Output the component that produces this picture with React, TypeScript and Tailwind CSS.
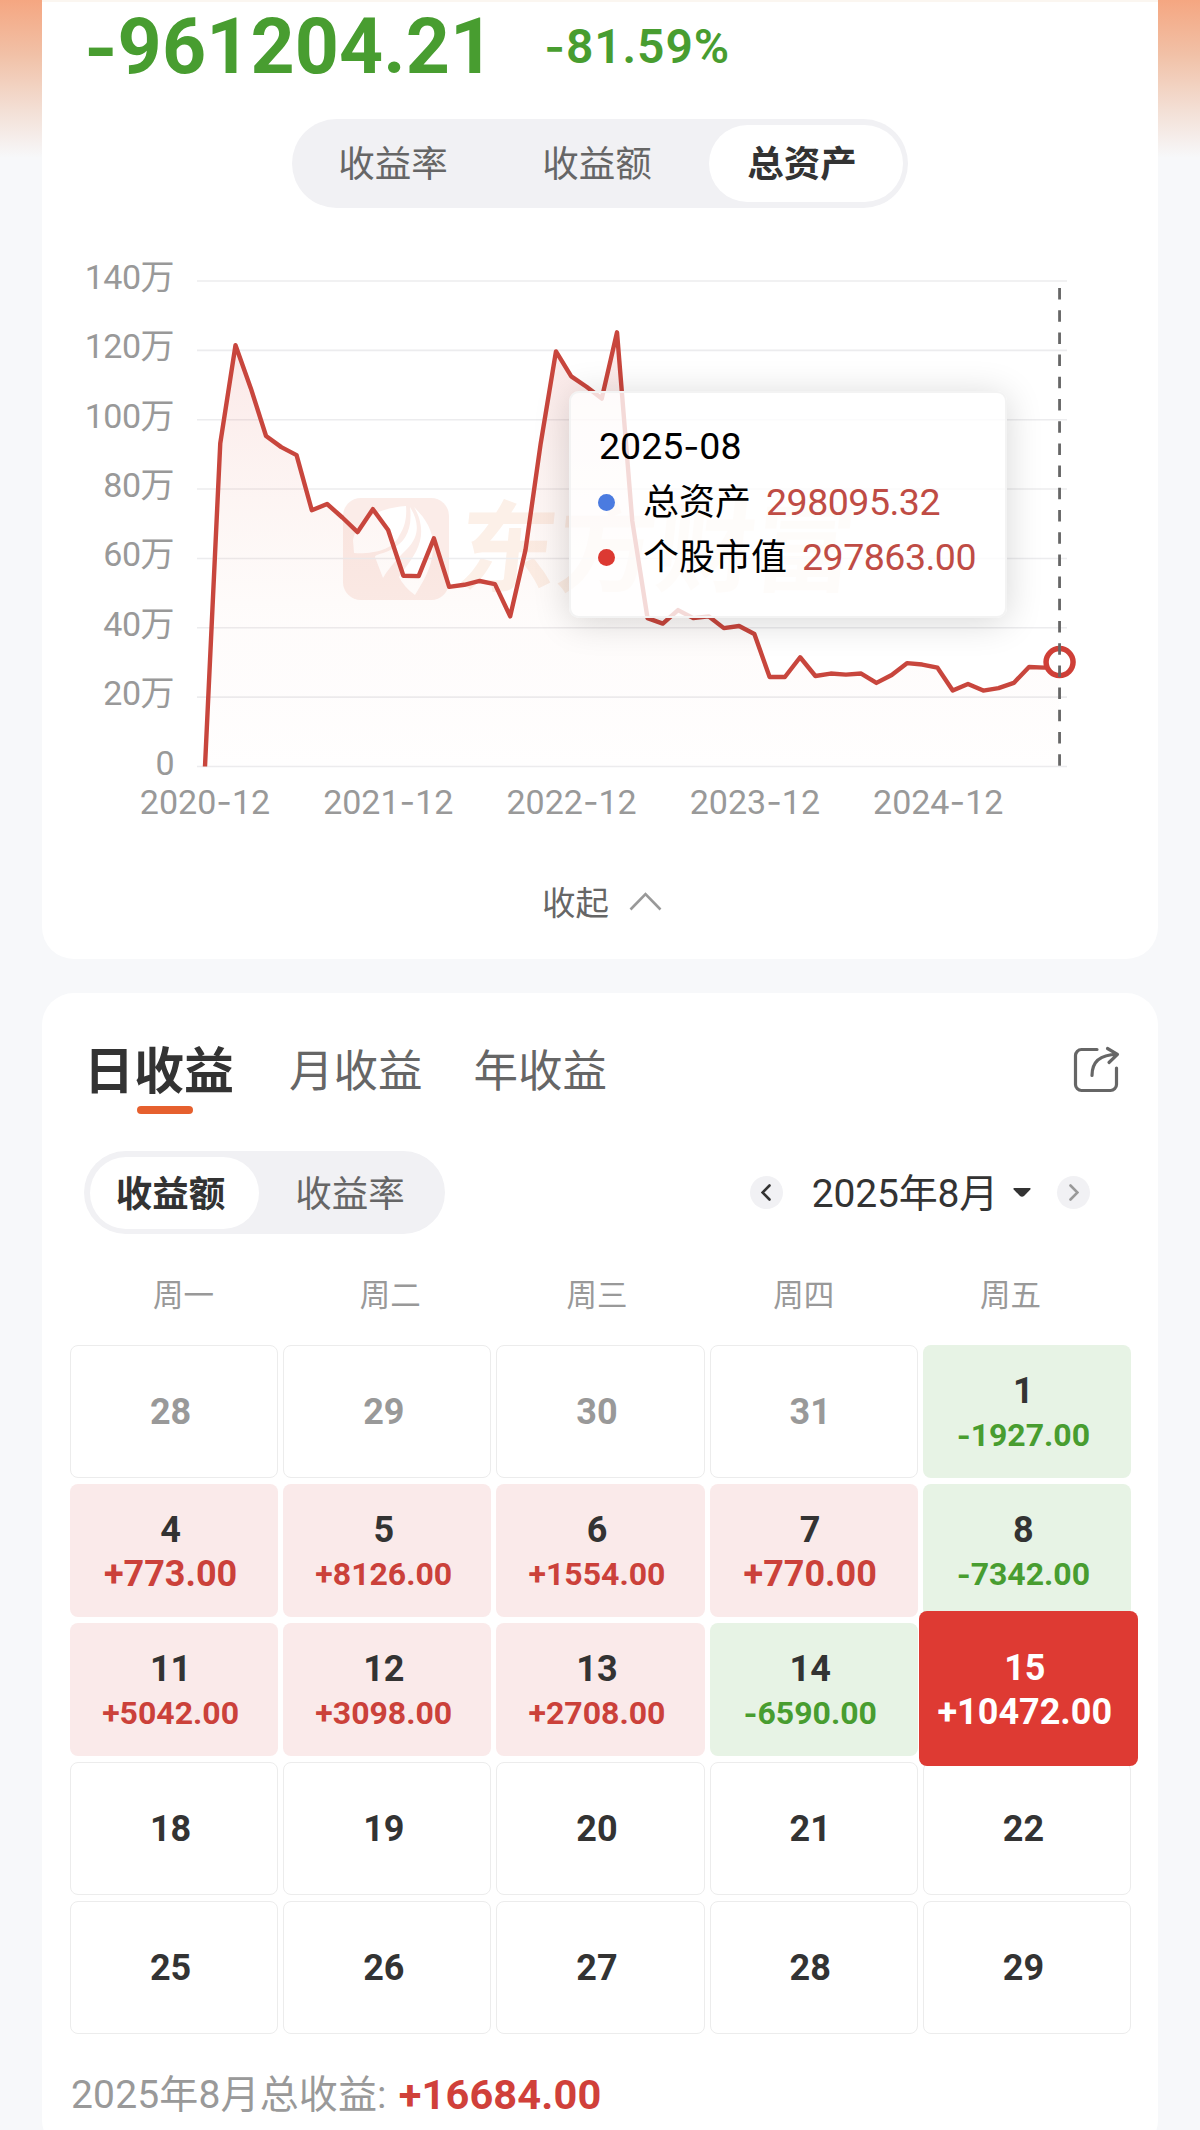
import { useState } from "react";

const Y_LABELS = ["140万", "120万", "100万", "80万", "60万", "40万", "20万", "0"];
const X_LABELS = ["2020-12", "2021-12", "2022-12", "2023-12", "2024-12"];

// one value per month, 2020-12 to 2025-08, in 万
const ASSETS = [
  0, 93.2, 121.5, 109.1, 95.3, 92.1, 89.8, 73.9, 75.7, 71.8, 67.6, 74.2, 68.2, 55, 54.9, 65.8, 51.8, 52.4, 53.5, 52.6, 43.3, 62.4, 93.2, 119.7, 112.5,
  109.5, 106.1, 125.2, 70.8, 42.8, 41.2, 45.1, 42.8, 43.3, 39.9, 40.5, 38.2, 25.8, 25.8, 31.5, 26.1, 26.8, 26.5, 26.8, 24.1, 26.4, 29.8, 29.4, 28.5,
  21.9, 23.8, 21.9, 22.6, 24.1, 28.7, 28.5, 30.1,
];

const CHART_TOP = 50;
const CHART_BOTTOM = 535.5;
const MONTH_STEP = 15.26;
const STEP_Y = (CHART_BOTTOM - CHART_TOP) / 7;

const pointX = (index: number) => 163 + index * MONTH_STEP;
const pointY = (value: number) => CHART_BOTTOM - (value / 140) * (CHART_BOTTOM - CHART_TOP);

type Day = { day: number; value?: string; outside?: boolean; active?: boolean };

const DAYS: Day[] = [
  { day: 28, outside: true },
  { day: 29, outside: true },
  { day: 30, outside: true },
  { day: 31, outside: true },
  { day: 1, value: "-1927.00" },
  { day: 4, value: "+773.00" },
  { day: 5, value: "+8126.00" },
  { day: 6, value: "+1554.00" },
  { day: 7, value: "+770.00" },
  { day: 8, value: "-7342.00" },
  { day: 11, value: "+5042.00" },
  { day: 12, value: "+3098.00" },
  { day: 13, value: "+2708.00" },
  { day: 14, value: "-6590.00" },
  { day: 15, value: "+10472.00", active: true },
  { day: 18 },
  { day: 19 },
  { day: 20 },
  { day: 21 },
  { day: 22 },
  { day: 25 },
  { day: 26 },
  { day: 27 },
  { day: 28 },
  { day: 29 },
];

export default function App() {
  return (
    <div className="h-[2130px] w-[1200px] overflow-hidden bg-[#f7f8fa] bg-[linear-gradient(to_bottom,#f5a681_0px,#f1c1a7_55px,#f3dfd5_110px,#f7f8fa_158px)] bg-no-repeat px-[42px] font-['Roboto','Noto_Sans_CJK_SC',sans-serif] text-[#333]">
      <section className="h-[959px] rounded-b-[32px] border-t-2 border-[#fbf6f0] bg-white">
        <div className="flex h-[117px] items-start pl-[42px]">
          <p className="pt-[3px] text-[77px] leading-[84px] font-bold tracking-[0.1px] text-[#489d30]"><Num text="-961204.21" /></p>
          <p className="pl-[50px] pt-[20px] text-[48px] leading-[50px] font-semibold tracking-[0.9px] text-[#489d30]"><Num text="-81.59%" /></p>
        </div>
        <AssetTabs />
        <AssetChart />
        <button type="button" className="mx-auto mt-[24px] flex h-[60px] items-center gap-5 pl-1 text-[33.5px] text-[#666]">
          收起
          <svg className="mb-1.5 h-[19px] w-[33px]" viewBox="0 0 33 19" fill="none" stroke="#999" strokeWidth="2.6">
            <path d="M1.5 17.5 16.5 2l15 15.5" />
          </svg>
        </button>
      </section>

      <section className="mt-[34px] h-[1159px] rounded-[32px] bg-white">
        <ProfitHeader />
        <div className="mt-[37px] flex items-center justify-between pr-[68px] pl-[42px]">
          <div className="flex h-[83px] w-[361px] items-center rounded-full bg-[#f1f1f4] p-1.5 text-[36.5px]">
            <button type="button" className="h-[72px] w-[169px] rounded-full bg-white pt-1.5 pr-2 font-bold">收益额</button>
            <button type="button" className="flex-1 pt-1.5 pl-0.5 text-[#666]">收益率</button>
          </div>
          <MonthPicker />
        </div>
        <div className="mt-[38px] flex h-[48px] items-center pr-[44px] pl-[38px] text-[30.5px] text-[#999]">
          {["周一", "周二", "周三", "周四", "周五"].map((name) => (
            <span key={name} className="flex-1 text-center">{name}</span>
          ))}
        </div>
        <div className="mt-[25px] grid grid-cols-5 gap-x-[5px] gap-y-1.5 pr-[27px] pl-7">
          {DAYS.map((item, index) => (
            <DayCell key={index} item={item} />
          ))}
        </div>
        <p className="mt-[31px] flex h-[60px] items-center pl-[29px] text-[39px] tracking-[0.15px] text-[#999]">
          2025年8月总收益:
          <span className="ml-3 text-[41.5px] font-bold text-[#d0403a]">+16684.00</span>
        </p>
      </section>
    </div>
  );
}

// Roboto's hyphen is too short next to figures, so the minus comes from Inter
function Num({ text }: { text: string }) {
  return (
    <>
      {text.split(/(-)/).map((part, index) => (part === "-" ? <span key={index} className="inline-block font-['Inter',sans-serif] text-[0.93em] leading-none">-</span> : part))}
    </>
  );
}

function AssetTabs() {
  const [selected, setSelected] = useState("总资产");

  return (
    <div className="mx-auto flex h-[89px] w-[616px] items-center rounded-full bg-[#f1f1f4] p-[5px] text-[36.5px]">
      {["收益率", "收益额", "总资产"].map((name) => (
        <button key={name} type="button" onClick={() => setSelected(name)} className={selected === name ? "ml-1 h-[77px] w-[194px] rounded-full bg-white pt-1 pr-2 font-bold text-[#333]" : "w-[204px] pt-1 pr-3 text-[#666]"}>
          {name}
        </button>
      ))}
    </div>
  );
}

function AssetChart() {
  const line = ASSETS.map((value, index) => `${pointX(index)},${pointY(value)}`).join(" ");
  const last = ASSETS.length - 1;
  const lastX = pointX(last);

  return (
    <div className="relative mt-[23px] h-[619px]">
      <svg className="block h-[619px] w-[1116px]" viewBox="0 0 1116 619">
        <defs>
          <linearGradient id="assetFill" x1="0" y1="0" x2="0" y2="1">
            <stop offset="0" stopColor="#de3a33" stopOpacity="0.12" />
            <stop offset="0.65" stopColor="#de7a53" stopOpacity="0.025" />
            <stop offset="1" stopColor="#de3a33" stopOpacity="0.005" />
          </linearGradient>
        </defs>
        <Watermark />
        {Y_LABELS.map((label, index) => (
          <g key={label}>
            <line x1="155" x2="1025" y1={CHART_TOP + index * STEP_Y} y2={CHART_TOP + index * STEP_Y} stroke="#ececee" strokeWidth="1.6" />
            <text x="132" y={CHART_TOP + index * STEP_Y + 8} textAnchor="end" fontSize="34" letterSpacing="-0.5" fill="#999">{label}</text>
          </g>
        ))}
        {X_LABELS.map((label, index) => (
          <text key={label} x={163 + index * 183.3} y="583" textAnchor="middle" fontSize="34" fill="#999"><AxisDate text={label} /></text>
        ))}
        <polygon points={`${pointX(0)},${CHART_BOTTOM} ${line} ${lastX},${CHART_BOTTOM}`} fill="url(#assetFill)" />
        <polyline points={line} fill="none" stroke="#c8463d" strokeWidth="4.4" strokeLinejoin="round" />
        <circle cx={lastX} cy={pointY(ASSETS[last])} r="13.5" fill="#fff" stroke="#cf3f37" strokeWidth="5.5" />
        <line x1={lastX} x2={lastX} y1="57" y2="535" stroke="#666" strokeWidth="2.8" strokeDasharray="11.5 10.7" />
      </svg>
      <div className="absolute top-[160px] left-[527px] h-[227px] w-[438px] rounded-[10px] border-2 border-[#f3f3f3] bg-white/80 pt-[28px] pl-[27px] text-[36px] text-black shadow-[0_4px_36px_rgba(0,0,0,0.16)]">
        <p className="h-[54px] pl-px text-[37.5px] leading-[50px]"><Num text="2025-08" /></p>
        <TooltipRow color="bg-[#4b7be0]" label="总资产" value="298095.32" />
        <TooltipRow color="bg-[#dc3932]" label="个股市值" value="297863.00" />
      </div>
    </div>
  );
}

function AxisDate({ text }: { text: string }) {
  const [year, month] = text.split("-");
  return (
    <>
      {year}
      <tspan fontFamily="Inter">-</tspan>
      {month}
    </>
  );
}

function TooltipRow({ color, label, value }: { color: string; label: string; value: string }) {
  return (
    <div className="flex h-[55px] items-center">
      <span className={`size-[17px] rounded-full ${color}`} />
      <span className="ml-[28px]">{label}</span>
      <span className="ml-[15px] text-[37.5px] tracking-[-0.5px] text-[#bf4c45]">{value}</span>
    </div>
  );
}

function Watermark() {
  return (
    <g>
      <rect x="301" y="267" width="106" height="102" rx="18" fill="#fbece8" />
      <path
        d="M364 275c-29 2-49 15-53 34l1 13c18 1 38-2 45-17 6-9 8-19 7-30zM368 276c3 24-6 36-18 42-8 5-17 5-17 8l8 21c7-12 17-22 24-29 12-12 13-26 3-42zM372 276c12 12 20 24 19 42-1 20-11 34-18 46-7-5-13-12-16-18 7-11 17-21 21-36 3-12 0-24-6-34z"
        fill="#fff"
      />
      <text x="0" y="0" transform="translate(413 353) skewX(-6)" fontSize="99" fontWeight="700" fill="#fcf0e8">东方财富</text>
    </g>
  );
}

function ProfitHeader() {
  return (
    <div className="flex h-[121px] items-start pt-[44px] pl-[44px]">
      <div className="flex h-[79px] w-[149px] flex-col text-[50px] leading-[70px] font-bold">
        <span className="-ml-0.5 whitespace-nowrap">日收益</span>
        <span className="-mt-px ml-[51px] h-2 w-[56px] shrink-0 rounded-full bg-[#e6602e]" />
      </div>
      <span className="ml-[54px] text-[44.5px] leading-[70px] text-[#666]">月收益</span>
      <span className="ml-[51px] text-[44.5px] leading-[70px] text-[#666]">年收益</span>
      <svg className="mt-[9px] mr-[38px] ml-auto h-[47px] w-[47px]" viewBox="0 0 47 47" fill="none" stroke="#666" strokeWidth="3.2" strokeLinecap="round" strokeLinejoin="round">
        <path d="M24 3.5H8.500a6 6 0 0 0-6 6v29a6 6 0 0 0 6 6h29a6 6 0 0 0 6-6V22" />
        <path d="M19 29.500C19 16 27 8.500 44 8.500M34.500 2.500 44.500 8.300 36 16.500" />
      </svg>
    </div>
  );
}

function MonthPicker() {
  return (
    <div className="flex items-center">
      <button type="button" aria-label="上个月" className="flex size-[33px] items-center justify-center rounded-full bg-[#f1f1f4]">
        <svg className="h-[17px] w-[10px]" viewBox="0 0 10 17" fill="none" stroke="#333" strokeWidth="2.6" strokeLinecap="round">
          <path d="M8.500 1.500 1.500 8.500l7 7" />
        </svg>
      </button>
      <span className="ml-[29px] pt-0.5 text-[39px] leading-[50px] tracking-[-0.2px]">2025年8月</span>
      <svg className="ml-[15px] h-[9px] w-[18px]" viewBox="0 0 18 9">
        <path d="M1 0h16q1 .5.3 1.500L11 8q-2 1.400-4 0L.7 1.500Q0 .5 1 0z" fill="#333" />
      </svg>
      <button type="button" aria-label="下个月" className="ml-[26px] flex size-[33px] items-center justify-center rounded-full bg-[#f1f1f4]">
        <svg className="h-[17px] w-[10px]" viewBox="0 0 10 17" fill="none" stroke="#999" strokeWidth="2.6" strokeLinecap="round">
          <path d="M1.500 1.500 8.500 8.500l-7 7" />
        </svg>
      </button>
    </div>
  );
}

function DayCell({ item }: { item: Day }) {
  const { day, value, outside, active } = item;

  if (!value) {
    return (
      <div className={`flex h-[133px] items-center justify-center rounded-lg border border-[#ececec] pt-px pr-[7px] text-[36px] font-bold ${outside ? "text-[#999]" : "text-[#333]"}`}>{day}</div>
    );
  }

  const loss = value.startsWith("-");
  // short amounts keep the full size, longer ones shrink to fit the cell
  const size = value.length > 7 && !active ? "text-[32px]" : "text-[36px]";
  const tone = active ? "text-white" : loss ? "text-[#489d30]" : "text-[#cb413a]";
  const box = active ? "z-10 -mx-1 -my-3 h-[155px] w-[219px] bg-[#de3a33] text-white" : loss ? "h-[133px] bg-[#e7f3e5]" : "h-[133px] bg-[#faeaea]";

  return (
    <div className={`flex flex-col items-center justify-center rounded-lg pt-[3px] pr-[7px] font-bold ${box}`}>
      <span className="text-[36px] leading-[44px]">{day}</span>
      <span className={`leading-[44px] ${size} ${tone}`}><Num text={value} /></span>
    </div>
  );
}
